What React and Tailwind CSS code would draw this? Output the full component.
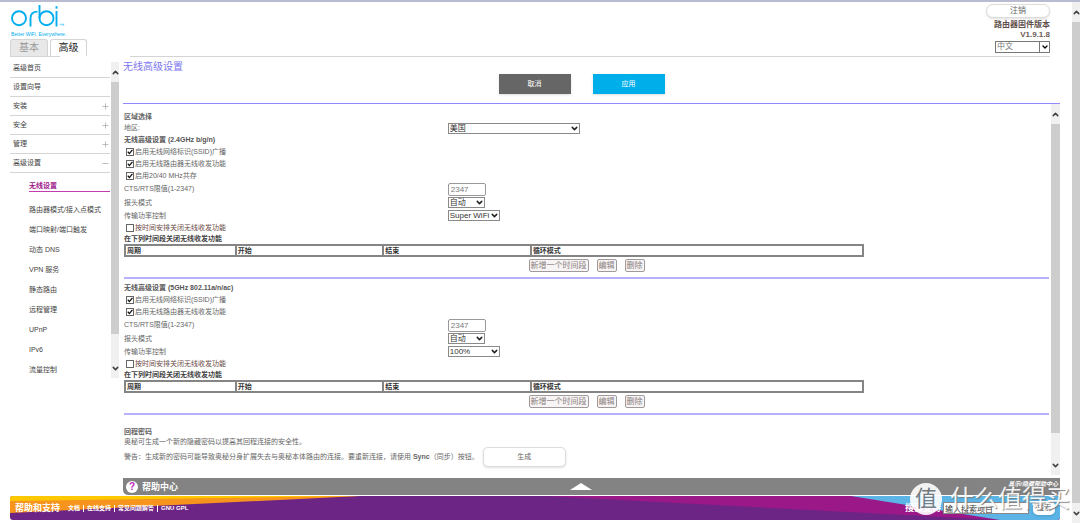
import { useState } from 'react';
import { ChevronDown, ChevronUp, Plus, Minus } from 'lucide-react';

const menu = [
  { name: '高级首页' },
  { name: '设置向导' },
  { name: '安装', icon: Plus },
  { name: '安全', icon: Plus },
  { name: '管理', icon: Plus },
  { name: '高级设置', icon: Minus },
];

const subMenu = [
  '路由器模式/接入点模式',
  '端口映射/端口触发',
  '动态 DNS',
  'VPN 服务',
  '静态路由',
  '远程管理',
  'UPnP',
  'IPv6',
  '流量控制',
];

function Logo() {
  return (
    <svg width="54" height="23" viewBox="0 0 54 23" fill="none" stroke="#00aeef" strokeWidth="1.9" aria-label="orbi">
      <circle cx="8" cy="13.2" r="7" />
      <path d="M19.5 21.5V13.5Q19.5 6.6 26.5 6.6" />
      <path d="M28.5 0V13.2" />
      <circle cx="35.5" cy="13.2" r="7" />
      <path d="M45.5 6V21.5" />
      <path d="M45.5 1.2V3.6" />
      <path d="M48.5 19.2h1.6M50.9 20.6v-1.4h1.8v1.4" strokeWidth="0.6" />
    </svg>
  );
}

function ScrollBar({ className, thumb }) {
  return (
    <div className={`flex shrink-0 flex-col items-center bg-[#f0f0f0] text-[#404040] ${className}`} aria-hidden="true">
      <div className="flex h-5 items-center">
        <ChevronUp size={9} strokeWidth={4} />
      </div>
      <div className={`w-full bg-[#cdcdcd] ${thumb}`} />
      <div className="mt-auto flex h-5 items-center">
        <ChevronDown size={9} strokeWidth={4} />
      </div>
    </div>
  );
}

function Select({ id, label, options, width }) {
  return (
    <div className={`relative ${width}`}>
      <select
        id={id}
        aria-label={label}
        className="block h-[11px] w-full appearance-none border border-[#8a8a8a] bg-white pl-px text-[8px] leading-[9px] text-[#333]"
      >
        {options.map((o) => (
          <option key={o}>{o}</option>
        ))}
      </select>
      <ChevronDown size={9} strokeWidth={4} className="pointer-events-none absolute top-px right-px text-[#222]" />
    </div>
  );
}

function Check({ id, label, checked: initial, className = '' }) {
  const [checked, setChecked] = useState(Boolean(initial));
  return (
    <div className={`flex h-3 items-center gap-px pl-[2px] ${className}`}>
      <span className="relative size-2">
        <input
          id={id}
          type="checkbox"
          checked={checked}
          onChange={(e) => setChecked(e.target.checked)}
          className="block size-2 appearance-none border border-[#666] bg-white"
        />
        {checked && (
          <svg className="pointer-events-none absolute inset-0" width="8" height="8" viewBox="0 0 8 8" fill="none" stroke="#111" strokeWidth="1.3">
            <path d="M1.8 3.8L3.4 5.6L6.4 1.8" />
          </svg>
        )}
      </span>
      <label htmlFor={id}>{label}</label>
    </div>
  );
}

function Field({ id, label, children, height = 'h-[13px]' }) {
  return (
    <div className={`flex items-center ${height}`}>
      <label htmlFor={id} className="w-[35%]">{label}</label>
      {children}
    </div>
  );
}

function SmallButton({ children }) {
  return (
    <button type="button" className="h-[13px] rounded-[2px] border border-[#a29a9a] bg-[#f6f4f4] px-px text-[8px] leading-[11px] text-[#8a8080]">
      {children}
    </button>
  );
}

function Radio({ id, title, checks, power }) {
  return (
    <section className="border-b-2 border-[#b5b1fa] pb-[5px]">
      <h2 className="h-3 font-bold leading-3 text-[#555]">{title}</h2>
      {checks.map((c, i) => (
        <Check key={c} id={`${id}-check-${i}`} label={c} checked />
      ))}
      <Field id={`${id}-rts`} label="CTS/RTS限值(1-2347)" height="h-[14px]">
        <input
          id={`${id}-rts`}
          defaultValue="2347"
          className="h-[13px] w-[38px] rounded-[2px] border border-[#999] bg-white px-[2px] text-[8px] text-[#777]"
        />
      </Field>
      <Field id={`${id}-preamble`} label="报头模式">
        <Select id={`${id}-preamble`} options={['自动']} width="w-[37px]" />
      </Field>
      <Field id={`${id}-power`} label="传输功率控制">
        <Select id={`${id}-power`} options={[power]} width="w-[52px]" />
      </Field>
      <Check id={`${id}-schedule`} label="按时间安排关闭无线收发功能" className="text-[#6b4a45]" />
      <p className="h-[10px] font-bold leading-[10px] text-[#444]">在下列时间段关闭无线收发功能</p>
      <table className="h-[13px] w-4/5 table-fixed border-collapse border-2 border-[#858585] text-left leading-[9px] text-[#333]">
        <thead>
          <tr>
            <th className="w-[15%] border-2 border-[#858585] px-px py-0">周期</th>
            <th className="w-1/5 border-2 border-[#858585] px-px py-0">开始</th>
            <th className="w-1/5 border-2 border-[#858585] px-px py-0">结束</th>
            <th className="border-2 border-[#858585] px-px py-0">循环模式</th>
          </tr>
        </thead>
      </table>
      <div className="mt-[2px] flex justify-center gap-2">
        <SmallButton>新增一个时间段</SmallButton>
        <SmallButton>编辑</SmallButton>
        <SmallButton>删除</SmallButton>
      </div>
    </section>
  );
}

function Header() {
  return (
    <header>
      <div className="flex justify-between pr-[10px]">
        <div className="pt-[3px]">
          <div className="pl-px">
            <Logo />
            <p className="mt-[3px] h-2 text-[5px] leading-[6px] text-[#00aeef]">Better WiFi. Everywhere.</p>
          </div>
          <nav className="flex gap-[2px] text-[10px] leading-4">
            <a href="#basic" className="h-[17px] w-[38px] rounded-t-[3px] border border-b-0 border-[#d4d4d4] bg-[#e8e8e8] text-center text-[#999]">基本</a>
            <a href="#advanced" className="h-[17px] w-[37px] rounded-t-[3px] border border-b-0 border-[#d4d4d4] bg-white text-center text-[#222]">高级</a>
          </nav>
        </div>
        <div className="flex flex-col items-end pt-[2px] font-bold text-[#666]">
          <button type="button" className="h-[14px] w-16 rounded-full border border-[#ddd] bg-white text-[8px] leading-3 font-normal shadow">注销</button>
          <p className="mt-[2px] text-[8px] leading-[10px] text-[#5f504c]">路由器固件版本</p>
          <p className="text-[8px] leading-[10px] text-[#6b5c55]">V1.9.1.8</p>
          <div className="relative mt-px w-[55px] font-normal">
            <select aria-label="语言" className="block h-3 w-full appearance-none border border-[#777] bg-white pl-px text-[8px] leading-[10px] text-[#777]">
              <option>中文</option>
            </select>
            <span className="pointer-events-none absolute top-0 right-0 flex h-3 w-[11px] items-center justify-center border border-[#777] text-black">
              <ChevronDown size={8} strokeWidth={4} />
            </span>
          </div>
        </div>
      </div>
      <div className="flex h-px pr-[10px]">
        <div className="w-[50px] bg-[#d4d4d4]" />
        <div className="ml-[70px] flex-1 bg-[#d4d4d4]" />
      </div>
    </header>
  );
}

function Sidebar() {
  return (
    <aside className="flex shrink-0 items-start">
      <nav className="w-[100px] pt-[2px] text-[#444]">
        {menu.map(({ name, icon: Icon }) => (
          <a key={name} href="#menu" className="flex h-[19px] items-center justify-between border-b border-[#d4d4d4] pl-[3px]">
            {name}
            {Icon && <Icon size={9} strokeWidth={2} className="text-[#aaa]" />}
          </a>
        ))}
        <div className="pl-[19px]">
          <a href="#wireless" className="mt-2 mb-2 block border-b border-[#c43bb0] leading-[10px] font-bold text-[#9c1489]">无线设置</a>
          {subMenu.map((name) => (
            <a key={name} href="#sub" className="flex h-5 items-center whitespace-nowrap">{name}</a>
          ))}
        </div>
      </nav>
      <ScrollBar className="mt-[5px] ml-px h-[316px] w-2" thumb="h-[252px]" />
    </aside>
  );
}

function Footer() {
  return (
    <footer className="relative mt-px flex h-6 items-center overflow-hidden rounded-[3px] bg-[#6d2585] pr-[5px] pl-[5px] text-white">
      <svg className="absolute inset-0 size-full" viewBox="0 0 1050 24" preserveAspectRatio="none" aria-hidden="true">
        <path d="M0 0H350L0 17Z" fill="#f7941d" />
        <path d="M0 0H350L0 5Z" fill="#fdc800" />
        <path d="M535 0H1050V24H990Z" fill="#9b1889" />
        <path d="M841 0H1050V24H990Z" fill="#5bb4e5" />
      </svg>
      <div className="relative flex flex-1 items-center">
        <strong className="text-[9px]">帮助和支持</strong>
        <nav className="ml-2 flex gap-[3px] text-[6px] leading-[7px] font-bold">
          <a href="#docs">文档</a>
          <a href="#support" className="border-l border-white pl-[3px]">在线支持</a>
          <a href="#faq" className="border-l border-white pl-[3px]">常见问题解答</a>
          <a href="#gpl" className="border-l border-white pl-[3px]">GNU GPL</a>
        </nav>
        <form className="ml-auto flex items-center" onSubmit={(e) => e.preventDefault()}>
          <label htmlFor="search" className="text-[9px] font-bold">搜索支持</label>
          <input id="search" defaultValue="输入搜索项目" className="ml-[2px] h-3 w-[86px] border border-[#888] bg-white px-px text-[8px] text-[#333]" />
          <button type="submit" className="ml-1 h-[14px] w-[22px] rounded-[5px] bg-white text-[7px] text-[#666] shadow">搜索</button>
        </form>
      </div>
    </footer>
  );
}

export default function App() {
  return (
    <div className="relative flex min-h-screen overflow-hidden border-y-2 border-t-[#b9bbd0] border-b-[#c8c8ce] bg-white font-['Liberation_Sans','Noto_Sans_CJK_SC',sans-serif] text-[7px] leading-[10px] text-[#666]">
      <div className="flex-1 pr-3 pl-[10px]">
        <Header />
        <div className="flex">
          <Sidebar />
          <main className="ml-1 min-w-0 flex-1">
            <div className="border-b border-[#8f88ff] pt-[2px] pb-[9px]">
              <h1 className="text-[10px] leading-[15px] text-[#7b74ee]">无线高级设置</h1>
              <div className="flex justify-center gap-[22px] pr-5 text-white">
                <button type="button" className="h-5 w-[72px] bg-[#666] shadow">取消</button>
                <button type="button" className="h-5 w-[72px] bg-[#00aeea] shadow">应用</button>
              </div>
            </div>

            <div className="flex">
              <div className="flex-1 pt-2 pr-[2px] pb-2 pl-px">
                <h2 className="font-bold">区域选择</h2>
                <Field id="region" label="地区:" height="h-3">
                  <Select id="region" options={['美国']} width="w-[132px]" />
                </Field>
                <Radio
                  id="g24"
                  title="无线高级设置 (2.4GHz b/g/n)"
                  checks={['启用无线网络标识(SSID)广播', '启用无线路由器无线收发功能', '启用20/40 MHz共存']}
                  power="Super WiFi"
                />
                <div className="h-[3px]" />
                <Radio
                  id="g5"
                  title="无线高级设置 (5GHz 802.11a/n/ac)"
                  checks={['启用无线网络标识(SSID)广播', '启用无线路由器无线收发功能']}
                  power="100%"
                />
                <h2 className="mt-3 font-bold">回程密码</h2>
                <p>奥秘可生成一个新的隐藏密码以提高其回程连接的安全性。</p>
                <div className="flex h-5 items-center gap-1">
                  <p>
                    警告：生成新的密码可能导致奥秘分身扩展失去与奥秘本体路由的连接。要重新连接，请使用 <b>Sync</b>（同步）按钮。
                  </p>
                  <button type="button" className="h-5 w-[83px] rounded-[5px] border border-[#ddd] bg-white shadow">生成</button>
                </div>
              </div>
              <ScrollBar className="w-[9px]" thumb="h-[309px]" />
            </div>

            <div className="relative mt-[3px] flex h-[17px] items-center rounded-bl-[5px] bg-[#838383] pr-[2px] pl-[3px] text-white">
              <span className="flex size-3 items-center justify-center rounded-full bg-white text-[10px] font-bold text-[#c026c0]">?</span>
              <strong className="ml-1 text-[9px]">帮助中心</strong>
              <svg className="absolute top-[5px] left-1/2 -ml-[22px]" width="22" height="7" viewBox="0 0 22 7" fill="#fff" aria-hidden="true">
                <path d="M0 7L11 0L22 7Z" />
              </svg>
              <a href="#help" className="mb-[5px] ml-auto text-[6px] leading-[7px] font-bold italic">显示/隐藏帮助中心</a>
            </div>
          </main>
        </div>
        <Footer />
      </div>
      <ScrollBar className="mb-px w-2" thumb="h-[481px]" />

      {/* site watermark over the bottom right corner */}
      <div className="pointer-events-none absolute right-[10px] bottom-[9px] flex items-center gap-2 opacity-90">
        <span className="flex size-8 items-center justify-center rounded-full bg-white text-[22px] text-[#707880]">值</span>
        <span className="text-2xl leading-8 whitespace-nowrap text-white [text-shadow:1px_1px_1px_#777]">什么值得买</span>
      </div>
    </div>
  );
}
